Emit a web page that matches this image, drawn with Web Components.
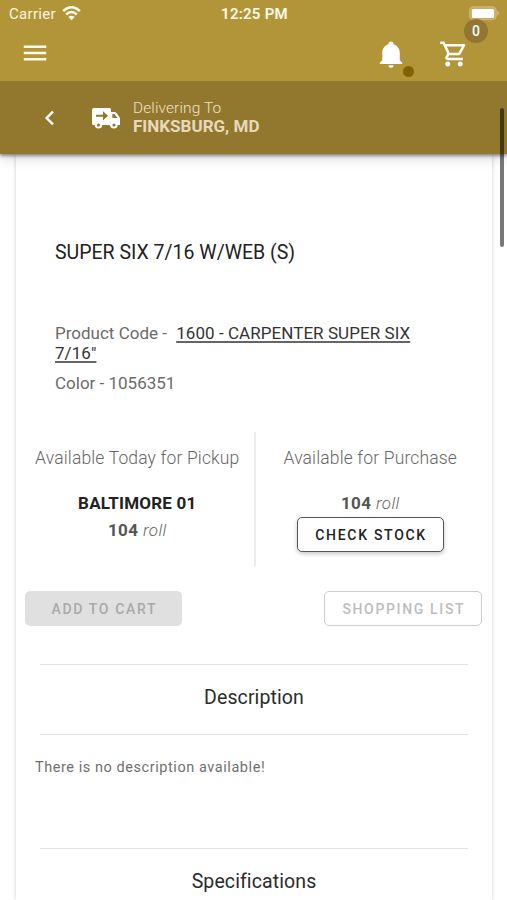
<!DOCTYPE html>
<html lang="en">
<head>
<meta charset="utf-8">
<title>Product details</title>
<style>
html,body{margin:0;height:900px;overflow:hidden;background:#fff}
body{font-family:Roboto,"Liberation Sans",sans-serif;color:#666}
</style>
</head>
<body>
<product-app></product-app>
<script>
const define = (name, css, html) => customElements.define(name, class extends HTMLElement {
  constructor() {
    super();
    const t = document.createElement('template');
    t.innerHTML = `<style>*{box-sizing:border-box}svg{display:block}${css}</style>${html}`;
    this.attachShadow({mode: 'open'}).append(t.content.cloneNode(true));
  }
});

define('status-bar', `
:host{display:grid;grid-template-columns:1fr auto 1fr;height:28px;align-items:center;padding:0 7px 0 9px;color:#fff;font-size:15px;line-height:20px}
.l{display:flex;align-items:center;gap:6px;letter-spacing:.3px;color:#fdf6e0}
.l svg{margin-top:-2px}
.t{font-weight:600;letter-spacing:.25px;font-size:15px;color:#fffbea}
.r{justify-self:end;margin-top:-2px}`, `
<div class="l"><span>Carrier</span><svg width="19" height="15" viewBox="0 0 19 15" fill="none" stroke="#fffbea" stroke-width="2.7"><path d="M1.2 5.2C6-.1 13-.1 17.8 5.2M4.2 8.5c3.3-3.3 7.3-3.3 10.6 0"/><path d="M9.5 14.2 6.3 10.9c2-1.6 4.4-1.6 6.4 0z" fill="#fffbea" stroke="none"/></svg></div>
<span class="t">12:25 PM</span>
<svg class="r" width="31" height="15" viewBox="0 0 31 15"><rect x=".7" y=".9" width="26.4" height="12.8" rx="4" fill="#c5ab68" stroke="#cdb67c" stroke-width="1.3"/><rect x="2.9" y="2.9" width="22.2" height="9" rx="1.5" fill="#fff"/><path d="M28.2 5c2.6 1 2.6 3.6 0 4.6z" fill="#cdb67c"/></svg>`);

define('app-toolbar', `
:host{display:flex;height:53px;align-items:center;padding:0 38.5px 0 20px}
.sp{flex:1}
.i{position:relative;width:30px;height:30px;margin:0 0 2px 33px}
.menu{margin-bottom:3px}
.dot{position:absolute;left:27px;top:27px;width:11px;height:11px;border-radius:50%;background:#836105}
.badge{position:absolute;left:25.500px;top:-20px;width:24px;height:24px;border-radius:50%;background:#927632;color:#fff;font-weight:500;font-size:14px;line-height:25px;text-align:center}`, `
<svg class="menu" width="30" height="30" viewBox="0 0 24 24" fill="#fffbe9"><path d="M3 18h18v-2H3v2zm0-5h18v-2H3v2zm0-7v2h18V6H3z"/></svg>
<div class="sp"></div>
<div class="i"><svg width="30" height="30" viewBox="0 0 24 24" fill="#fff"><path d="M21,19V20H3V19L5,17V11C5,7.9 7.03,5.17 10,4.29C10,4.19 10,4.1 10,4A2,2 0 0,1 12,2A2,2 0 0,1 14,4C14,4.1 14,4.19 14,4.29C16.97,5.17 19,7.9 19,11V17L21,19M14,21A2,2 0 0,1 12,23A2,2 0 0,1 10,21"/></svg><span class="dot"></span></div>
<div class="i"><svg width="30" height="30" viewBox="0 0 24 24" fill="#fff"><path d="M15.55 13c.75 0 1.41-.41 1.75-1.03l3.58-6.49c.37-.66-.11-1.48-.87-1.48H5.21l-.94-2H1v2h2l3.6 7.59-1.35 2.44C4.52 15.37 5.48 17 7 17h12v-2H7l1.1-2h7.45zM6.16 6h12.15l-2.76 5H8.53L6.16 6zM7 18c-1.1 0-1.99.9-1.99 2S5.9 22 7 22s2-.9 2-2-.9-2-2-2zm10 0c-1.1 0-1.99.9-1.99 2s.89 2 1.99 2 2-.9 2-2-.9-2-2-2z"/></svg><span class="badge">0</span></div>`);

define('delivery-bar', `
:host{display:flex;height:73px;align-items:center;background:#92782f;padding-left:44px;color:#e6dabb}
.truck{margin:1px 13px 0 37px}
.a{font-size:15.5px;line-height:18px;letter-spacing:.1px;font-weight:300;color:#eee3c6}
.b{font-size:17px;line-height:18px;font-weight:700}
.txt{margin-top:-1px}`, `
<svg width="11" height="16" viewBox="0 0 11 16" fill="none" stroke="#fff" stroke-width="2.4"><path d="M9 1.6 2.6 8 9 14.4"/></svg>
<svg class="truck" width="28" height="21" viewBox="0 0 28 21"><path d="M2 0h15.500q1.500 0 1.500 1.500V4h3.500q1 0 1.700.8l3 4q.8 1 .8 2V17h-3a4 4 0 0 1-7.500 0h-7.500a4 4 0 0 1-7.500 0H1.500Q0 17 0 15.500V2Q0 0 2 0z" fill="#fff"/><circle cx="6.500" cy="17" r="2.600" fill="#92782f" stroke="#fff" stroke-width="2"/><circle cx="22" cy="17" r="2.600" fill="#92782f" stroke="#fff" stroke-width="2"/><path d="M20.300 6h2.100l3.100 4h-5.200z" fill="#92782f"/><path d="M4 6.800h7V3.200l5 4.600-5 4.600V8.800H4z" fill="#92782f"/></svg>
<div class="txt"><div class="a">Delivering To</div><div class="b">FINKSBURG, MD</div></div>`);

define('app-header', `
:host{display:block;position:relative;z-index:1;height:154px;background:#b39539;box-shadow:0 2px 3px rgba(0,0,0,.4),0 4px 12px rgba(0,0,0,.16)}`, `
<status-bar></status-bar><app-toolbar></app-toolbar><delivery-bar></delivery-bar>`);

define('action-button', `
:host{display:flex;align-items:center;justify-content:center;box-sizing:border-box;height:35px;border:1.5px solid transparent;border-radius:5px;font-size:14px;font-weight:500;letter-spacing:1.65px;text-indent:1.65px;white-space:nowrap;color:#222}
:host([kind=raised]){width:147px;margin-top:2px;border-color:#555;background:#fff;box-shadow:0 2px 4px rgba(0,0,0,.22);letter-spacing:1.7px}
:host([kind=filled]){width:157px;background:#e0e0e0;color:#a9a9a9}
:host([kind=outlined]){width:158px;border-color:#ccc;color:#bdbdbd}`, `<slot></slot>`);

define('stock-panel', `
:host{display:flex;flex-direction:column;align-items:center;box-sizing:border-box;height:134px;padding-top:15px;line-height:22px}
:host([side=left]){width:237.500px;padding-left:5px}
:host([side=right]){flex:1;padding-right:7px}
.h{font-weight:300;font-size:17.500px;color:#666;letter-spacing:.15px;margin-bottom:23px;white-space:nowrap}`, `<div class="h"><slot name="heading"></slot></div><slot></slot>`);

define('stock-amount', `
:host{display:block;font-size:17px;line-height:23px;letter-spacing:.4px}
b{font-weight:700;color:#555}i{font-weight:300;color:#666}`, `<b><slot></slot></b> <i>roll</i>`);

define('info-section', `
:host{display:block;margin:0 24px}
.h{height:71px;border-top:1px solid #e2e2e2;border-bottom:1px solid #e2e2e2;display:flex;align-items:center;justify-content:center;font-size:19.500px;color:#2b2b2b;padding-bottom:5px;letter-spacing:.1px}
.b{height:113px;margin-left:-5px;padding-top:23px;font-size:14.500px;line-height:20px;letter-spacing:.56px;color:#707070}`, `
<div class="h"><slot name="heading"></slot></div><div class="b"><slot></slot></div>`);

define('product-card', `
:host{display:block;margin:0 15px 0 16px;height:746px;background:#fff;box-shadow:0 0 4px rgba(0,0,0,.2);box-sizing:border-box;padding-top:87px;overflow:hidden}
.title{margin-left:39px;font-size:19.500px;line-height:24px;color:#222}
.meta{margin:58px 60px 0 39px;font-size:17px;line-height:20px;color:#6a6a6a}
.meta a{color:#333;text-decoration:underline;text-decoration-color:#666;text-decoration-thickness:1.500px;text-underline-offset:2px;letter-spacing:.06px;margin-left:5px}
.color{margin:10px 0 0 39px;font-size:17px;line-height:20px;color:#6a6a6a}
.stock{display:flex;margin-top:39px}
.rule{width:2px;height:134px;background:#ebebeb}
.store{font-size:17px;letter-spacing:.2px;font-weight:700;color:#222;height:27px;line-height:23px}
.actions{display:flex;justify-content:space-between;padding:0 10px 0 9px;margin:25px 0 38px}`, `
<div class="title">SUPER SIX 7/16 W/WEB (S)</div>
<div class="meta">Product Code - <a><span>1600 - CARPENTER SUPER SIX</span> <span>7/16"</span></a></div>
<div class="color">Color - 1056351</div>
<div class="stock">
<stock-panel side="left"><span slot="heading">Available Today for Pickup</span><div class="store">BALTIMORE 01</div><stock-amount>104</stock-amount></stock-panel>
<div class="rule"></div>
<stock-panel side="right"><span slot="heading">Available for Purchase</span><stock-amount>104</stock-amount><action-button kind="raised">CHECK STOCK</action-button></stock-panel>
</div>
<div class="actions"><action-button kind="filled">ADD TO CART</action-button><action-button kind="outlined">SHOPPING LIST</action-button></div>
<info-section><span slot="heading">Description</span>There is no description available!</info-section>
<info-section><span slot="heading">Specifications</span></info-section>`);

define('product-app', `
:host{display:block;position:relative;width:507px;height:900px;overflow:hidden}
.scroll{position:absolute;z-index:2;right:3px;top:108px;width:4px;height:139px;border-radius:2px;background:rgba(0,0,0,.53)}`, `
<app-header></app-header><product-card></product-card><div class="scroll"></div>`);
</script>
</body>
</html>
